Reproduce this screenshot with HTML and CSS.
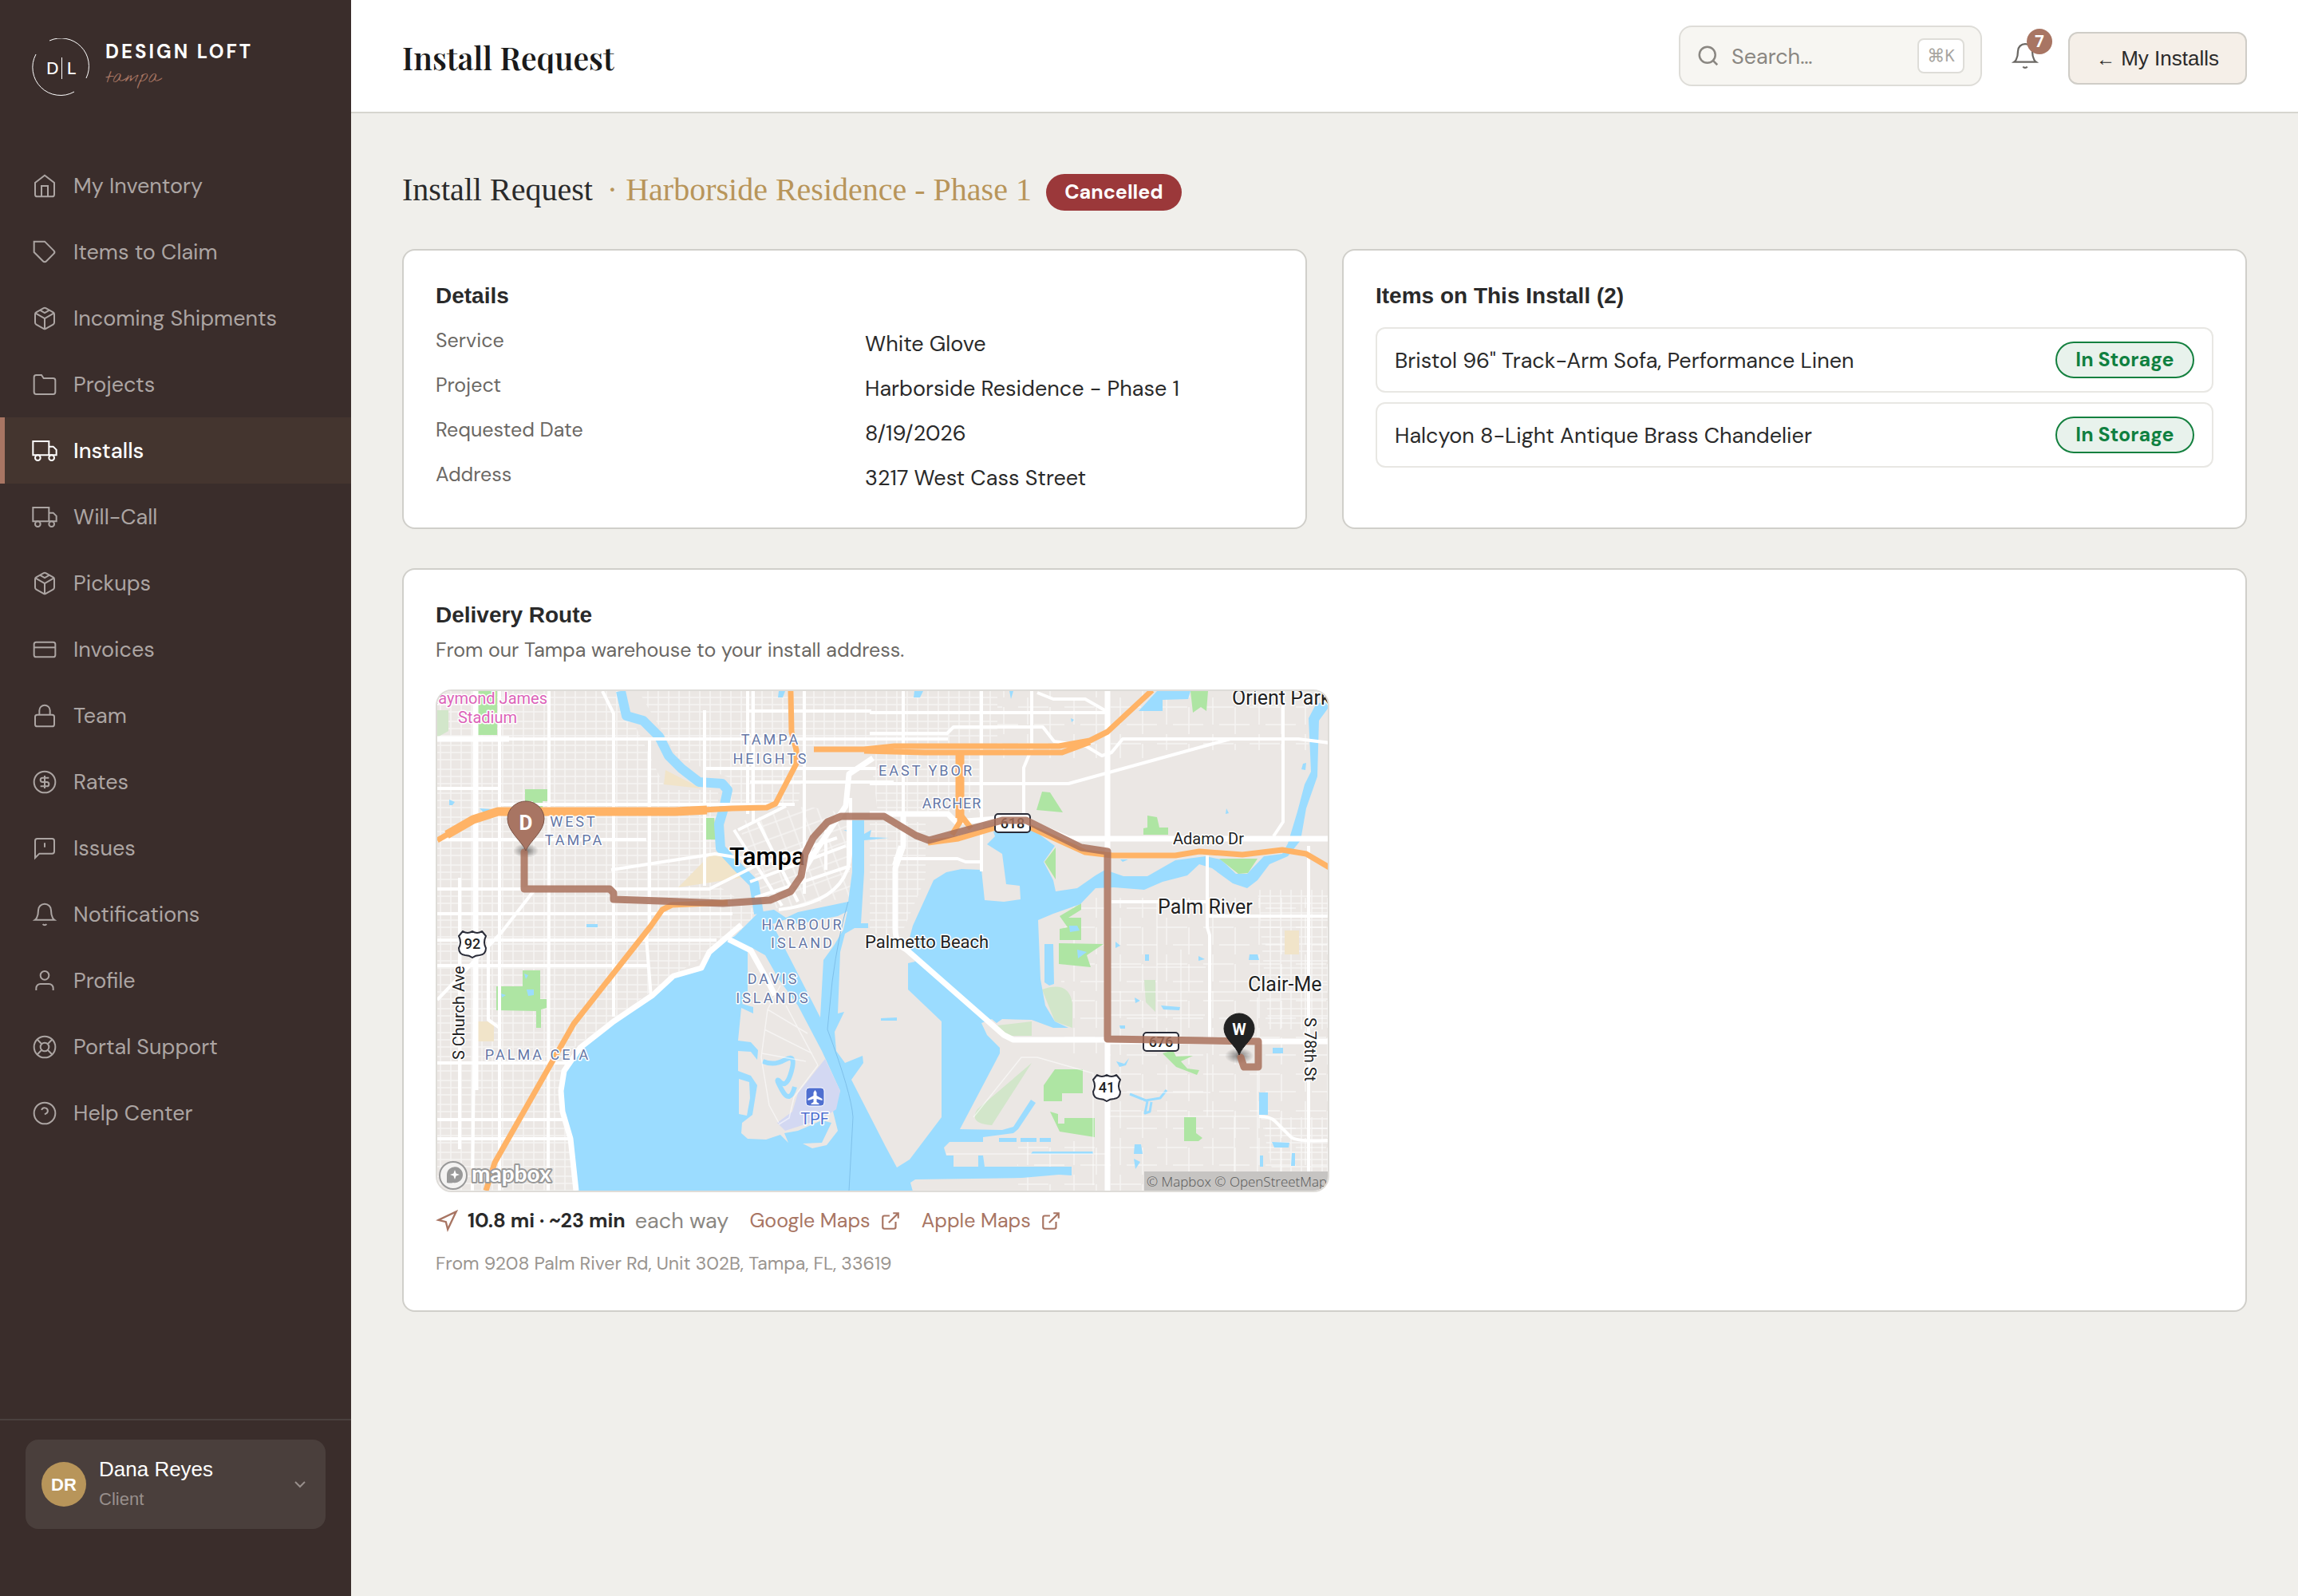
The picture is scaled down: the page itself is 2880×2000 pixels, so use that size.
FILE: index.html
```html
<!DOCTYPE html>
<html lang="en">
<head>
<meta charset="utf-8">
<title>Install Request</title>
<meta name="viewport" content="width=device-width, initial-scale=1">
<link rel="stylesheet" href="styles.css">
</head>
<body>
<svg class="sprite" aria-hidden="true">
  <symbol id="home" viewBox="0 0 24 24"><path d="M3 9l9-7 9 7v11a2 2 0 0 1-2 2H5a2 2 0 0 1-2-2z"/><path d="M9 22V12h6v10"/></symbol>
  <symbol id="tag" viewBox="0 0 24 24"><path d="M20.59 13.41l-7.17 7.17a2 2 0 0 1-2.83 0L2 12V2h10l8.59 8.59a2 2 0 0 1 0 2.82z"/></symbol>
  <symbol id="box" viewBox="0 0 24 24"><path d="M21 16V8a2 2 0 0 0-1-1.73l-7-4a2 2 0 0 0-2 0l-7 4A2 2 0 0 0 3 8v8a2 2 0 0 0 1 1.73l7 4a2 2 0 0 0 2 0l7-4A2 2 0 0 0 21 16z"/><path d="M7.5 4.21l4.5 2.6 4.5-2.6M3.27 6.96L12 12.01l8.73-5.05M12 22.08V12"/></symbol>
  <symbol id="folder" viewBox="0 0 24 24"><path d="M22 19a2 2 0 0 1-2 2H4a2 2 0 0 1-2-2V5a2 2 0 0 1 2-2h5l2 3h9a2 2 0 0 1 2 2z"/></symbol>
  <symbol id="truck" viewBox="0 0 24 24"><path d="M1 3h15v13H1zM16 8h4l3 3v5h-7z"/><circle cx="5.5" cy="18.5" r="2.5"/><circle cx="18.5" cy="18.5" r="2.5"/></symbol>
  <symbol id="card" viewBox="0 0 24 24"><rect x="2" y="5" width="20" height="14" rx="2"/><path d="M2 10h20"/></symbol>
  <symbol id="lock" viewBox="0 0 24 24"><rect x="3" y="11" width="18" height="11" rx="2"/><path d="M7 11V7a5 5 0 0 1 10 0v4"/></symbol>
  <symbol id="dollar" viewBox="0 0 24 24"><circle cx="12" cy="12" r="10"/><path d="M16 8h-6a2 2 0 1 0 0 4h4a2 2 0 1 1 0 4H8M12 18V6"/></symbol>
  <symbol id="message" viewBox="0 0 24 24"><path d="M21 15a2 2 0 0 1-2 2H7l-4 4V5a2 2 0 0 1 2-2h14a2 2 0 0 1 2 2zM12 7v4"/></symbol>
  <symbol id="bell" viewBox="0 0 24 24"><path d="M18 8A6 6 0 0 0 6 8c0 7-3 9-3 9h18s-3-2-3-9M13.73 21a2 2 0 0 1-3.46 0"/></symbol>
  <symbol id="user" viewBox="0 0 24 24"><path d="M20 21v-2a4 4 0 0 0-4-4H8a4 4 0 0 0-4 4v2"/><circle cx="12" cy="7" r="4"/></symbol>
  <symbol id="buoy" viewBox="0 0 24 24"><circle cx="12" cy="12" r="10"/><circle cx="12" cy="12" r="4"/><path d="M4.93 4.93l4.24 4.24M14.83 14.83l4.24 4.24M14.83 9.17l4.24-4.24M4.93 19.07l4.24-4.24"/></symbol>
  <symbol id="help" viewBox="0 0 24 24"><circle cx="12" cy="12" r="10"/><path d="M9.09 9a3 3 0 0 1 5.83 1c0 2-3 3-3 3"/></symbol>
  <symbol id="search" viewBox="0 0 24 24"><circle cx="11" cy="11" r="8"/><path d="M21 21l-4.35-4.35"/></symbol>
  <symbol id="chevron" viewBox="0 0 24 24"><path d="M6 9l6 6 6-6"/></symbol>
  <symbol id="navigate" viewBox="0 0 24 24"><path d="M3 11l19-9-9 19-2-8z"/></symbol>
  <symbol id="external" viewBox="0 0 24 24"><path d="M18 13v6a2 2 0 0 1-2 2H5a2 2 0 0 1-2-2V8a2 2 0 0 1 2-2h6M15 3h6v6M10 14L21 3"/></symbol>
</svg>

<div class="app">
  <aside class="sidebar">
    <a class="brand" href="#">
      <svg class="brand-mark" viewBox="0 0 72 72" aria-hidden="true">
        <path d="M22 3A35 35 0 0 1 68 50M53 67A35 35 0 0 1 5 20M37.500 24v27"/>
        <text x="26" y="45">D</text><text x="50" y="45">L</text>
      </svg>
      <span class="brand-text"><span class="brand-name">DESIGN LOFT</span><span class="brand-city">tampa</span></span>
    </a>
    <nav class="nav">
      <a href="#"><svg class="icon"><use href="#home"/></svg>My Inventory</a>
      <a href="#"><svg class="icon"><use href="#tag"/></svg>Items to Claim</a>
      <a href="#"><svg class="icon"><use href="#box"/></svg>Incoming Shipments</a>
      <a href="#"><svg class="icon"><use href="#folder"/></svg>Projects</a>
      <a href="#" class="active" aria-current="page"><svg class="icon"><use href="#truck"/></svg>Installs</a>
      <a href="#"><svg class="icon"><use href="#truck"/></svg>Will-Call</a>
      <a href="#"><svg class="icon"><use href="#box"/></svg>Pickups</a>
      <a href="#"><svg class="icon"><use href="#card"/></svg>Invoices</a>
      <a href="#"><svg class="icon"><use href="#lock"/></svg>Team</a>
      <a href="#"><svg class="icon"><use href="#dollar"/></svg>Rates</a>
      <a href="#"><svg class="icon"><use href="#message"/></svg>Issues</a>
      <a href="#"><svg class="icon"><use href="#bell"/></svg>Notifications</a>
      <a href="#"><svg class="icon"><use href="#user"/></svg>Profile</a>
      <a href="#"><svg class="icon"><use href="#buoy"/></svg>Portal Support</a>
      <a href="#"><svg class="icon"><use href="#help"/></svg>Help Center</a>
    </nav>
    <div class="account">
      <button class="account-button" type="button">
        <span class="avatar">DR</span>
        <span class="account-text"><span class="account-name">Dana Reyes</span><span class="account-role">Client</span></span>
        <svg class="icon icon-chevron"><use href="#chevron"/></svg>
      </button>
    </div>
  </aside>

  <div class="page">
    <header class="topbar">
      <h1 class="topbar-title">Install Request</h1>
      <div class="topbar-actions">
        <label class="search">
          <svg class="icon icon-search"><use href="#search"/></svg>
          <input type="text" placeholder="Search…" aria-label="Search">
          <kbd>⌘K</kbd>
        </label>
        <button class="bell" type="button" aria-label="Notifications"><svg class="icon icon-bell"><use href="#bell"/></svg><span class="bell-count">7</span></button>
        <button class="back" type="button"><span class="back-arrow">←</span> My Installs</button>
      </div>
    </header>

    <main class="content">
      <div class="heading">
        <h2>Install Request</h2>
        <span class="heading-project">· Harborside Residence - Phase 1</span>
        <span class="badge badge-cancelled">Cancelled</span>
      </div>

      <div class="columns">
        <section class="panel">
          <h3>Details</h3>
          <dl class="details">
            <dt>Service</dt><dd>White Glove</dd>
            <dt>Project</dt><dd>Harborside Residence - Phase 1</dd>
            <dt>Requested Date</dt><dd>8/19/2026</dd>
            <dt>Address</dt><dd>3217 West Cass Street</dd>
          </dl>
        </section>
        <section class="panel">
          <h3>Items on This Install (2)</h3>
          <ul class="items">
            <li><span>Bristol 96" Track-Arm Sofa, Performance Linen</span><span class="badge badge-stored">In Storage</span></li>
            <li><span>Halcyon 8-Light Antique Brass Chandelier</span><span class="badge badge-stored">In Storage</span></li>
          </ul>
        </section>
      </div>

      <section class="panel">
        <h3>Delivery Route</h3>
        <p class="route-note">From our Tampa warehouse to your install address.</p>
        <svg class="map" viewBox="548 866 1116 626" role="img" aria-label="Map of the delivery route">
          <defs>
            <pattern id="blocks" width="26" height="30" patternUnits="userSpaceOnUse"><path d="M0 4h26M0 13h26M0 22h26M6 0v30M19 0v30"/></pattern>
            <pattern id="blocks-wide" width="58" height="46" patternUnits="userSpaceOnUse"><path d="M0 12h38M20 34h38M12 0v34M40 12v34"/></pattern>
            <pattern id="blocks-tilt" width="18" height="18" patternUnits="userSpaceOnUse" patternTransform="rotate(-20)"><path d="M0 4h18M4 0v18"/></pattern>
            <radialGradient id="pin-shadow"><stop offset="0" stop-color="#000" stop-opacity=".5"/><stop offset="1" stop-color="#000" stop-opacity="0"/></radialGradient>
          </defs>
          <rect class="land" x="548" y="866" width="1116" height="626"/>
          <g class="blocks">
            <path fill="url(#blocks)" d="M548 866H775L835 990H900V1110L960 1150 840 1225 710 1320 720 1492H548z"/>
            <path fill="url(#blocks)" d="M800 866H1250V935H1010L1000 1010H915V975L850 950zM1090 940H1230V1018H1100zM1090 1030H1160V1100L1130 1170H1090z"/>
            <path fill="url(#blocks-tilt)" d="M925 1030L1010 1010 1063 1020 1066 1125 960 1140z"/>
            <path fill="url(#blocks-wide)" d="M1250 866H1440V950H1250zM1390 866H1640V940H1390zM1330 1125H1664V1492H1275V1430H1390V1320H1330z"/>
            <path fill="url(#blocks)" d="M1576 1115H1664V1290H1590zM1580 1400H1664V1492H1600z"/>
          </g>

          <g class="park">
            <path d="M599 866h24v55h-24zM658 989h28v15h-6v20h-12v-20h-10zM881 1025h14l3 27h-17z"/>
            <path d="M655 1216h22v36h8v11l-7 2v23h-6v-21l-50-1v-30h33z"/>
            <path d="M1306 992l10 1 16 25-33-3zM1438 1022l12 2 3 13h11v9h-31v-8l5-1z"/>
            <path d="M1492 866h22l-2 25-7-5-10 7zM1328 1148l27-16v8l-16 10h16v28h-27v-14l10-2z"/>
            <path d="M1327 1182l56 1-21 14 5 15-40-4zM1322 1340h35v30h-26v10h-23v-20z"/>
            <path d="M1316 1393l10 3v12h8v-7h38v24l-44-7zM1484 1400h15v20l8 6-5 4h-18z"/>
            <path d="M1457 1320l13-4 4 8 21-1-15 7 8 9 15 2-3 6-26-10z"/>
          </g>
          <g class="marsh">
            <path d="M1293 1332l-68 58q-12 18 18 20zM1250 1285l43-5v18h-30zM1306 1240q34-12 38 18v30l-22-8zM1434 1228h14v40l-12-12zM548 890h14v26l-14 8z"/>
          </g>
          <path class="school" d="M834 965l45 23-47-5zM891 1070h18l20 30-79 12zM595 1280h24v25h-24zM1610 1166h18v30h-18z"/>

          <g class="water">
            <path d="M722 1493L715 1427 705 1393 703 1367 707 1342 727 1313 769 1280 818 1247 844 1223 879 1213 889 1193 913 1177 921 1173 951 1143 970 1140 985 1150 1000 1143 1063 1130 1068 1093V1045L1057 1040 1068 1041V1028H1083V1045L1092 1040 1090 1049 1114 1050 1083 1053V1093L1079 1157H1088V1163H1071L1059 1170 1053 1193 1050 1270 1058 1268 1046 1293 1048 1317 1059 1332 1081 1323 1082 1332 1067 1353 1110 1437 1124 1463 1140 1453 1180 1400V1280L1138 1240V1207L1147 1205 1136 1190 1144 1160 1170 1103 1186 1093 1205 1089 1230 1090 1234 1128 1258 1130 1279 1127 1278 1110 1261 1108 1256 1070 1237 1058 1247 1048 1245 1042 1291 1037 1322 1060 1308 1080 1320 1103 1323 1117 1350 1113 1373 1097 1385 1090 1408 1098H1438L1473 1078 1511 1073 1530 1077 1549 1095H1563L1584 1073 1607 1070 1614 1057 1626 1017 1635 983 1643 967 1640 900 1649 883 1664 877V888L1653 903 1651 973 1637 1013 1630 1053 1614 1073 1591 1083 1576 1103 1563 1113 1545 1107 1519 1088 1503 1083 1488 1097 1457 1105 1434 1115 1396 1112 1373 1113 1354 1133 1320 1145 1301 1153 1304 1227 1310 1260 1322 1280 1339 1288 1320 1288 1293 1278 1256 1277 1249 1282 1243 1277 1230 1282 1237 1297 1253 1313V1320L1203 1415 1256 1416 1270 1412 1292 1378 1298 1382 1276 1415 1270 1420 1232 1425V1431H1190L1183 1438 1186 1448H1195V1462H1226V1448H1232L1234 1462H1343V1473L1327 1472 1281 1476 1147 1478 1141 1482 1144 1493z"/>
            <path d="M1450 866h42l-3 10-32 1v14h-30zM1146 866h11l-4 8h-8zM1265 866h5l-3 10zM976 866h8l-3 8h-6zM563 1002l7 3-3 4h-4zM601 1013l14 1-8 5zM735 1158h14v4h-14zM1309 1183h11l1 50-6 2-6-4zM1340 1160h10l3 6-12 2zM1350 1190l12 3-11 8zM1398 1180l6 5-6 3zM1435 1196h5v8h-5zM1502 1198l8 4-8 2zM1566 1196h10l2 7h-13zM1422 1250l7 4-6 3zM1455 1260l24 2-1 4-20-1zM1403 1285h7v4h-6zM1595 1313h13v7h-13zM1578 1369h11v28h-11zM1594 1431l22 1-1 6h-18zM1422 1434h8l2 12h-11zM1421 1452l8 4-6 9zM1619 1445h4v16h-5zM1579 1448h4v14h-4zM1294 1443h76v3h-78zM1252 1426h22v5h-22zM1279 1426h20v5h-20zM1303 1426h14v5h-14zM1404 1077h10l-7 3zM1633 957l4-1-1 9-5-1zM1537 1013l3 6-4 1zM1342 900l4 2-3 3zM1399 1330l10 3 6-7-4 9-8 2zM1104 1276l20-1v4h-20zM657 1220l5 2-3 5zM628 1245l6 2-5 3zM660 1240h9v7l-7 1z"/>
          </g>
          <path class="river" d="M778 866L785 897 806 903 826 923 838 947 854 963 876 980 905 982 912 990 907 1013 901 1033 903 1063 925 1087 945 1107 951 1145"/>
          <path class="creek" d="M1416 1371l20 8 18-3 8-10M1438 1380l-3 15 6-2 2-12"/>

          <g class="island">
            <path d="M968 1158L985 1152 1000 1158 1050 1148 1062 1142 1057 1165 1045 1185 1032 1203 1028 1275z"/>
            <path d="M941 1187L959 1197 976 1227 1000 1260 1030 1317 1053 1367 1044 1393 1050 1417 1036 1435 1018 1439 1006 1433 1030 1432 1042 1407 1030 1404 1000 1417 983 1420 988 1432 978 1422 960 1428 937 1427 929 1420 930 1407 943 1397 949 1360 941 1348 925 1342V1317L941 1318 949 1328 950 1316 941 1306 925 1304 929 1263 944 1270 944 1262 930 1258 937 1243V1193z"/>
            <path d="M926 1352l13 4 1 20-4 22-10-2z"/>
          </g>
          <path class="airport" d="M1034 1327L1053 1367 1048 1390 1030 1402 984 1417 974 1407 993 1393 1000 1370z"/>
          <path class="inlet" d="M956 1330q14 6 28-2t8 14-14 14 2 10 16-4"/>
          <path class="marsh-bright" d="M1323 1062v40l-14-22zM1528 1076h48l-12 18-12 1z"/>
          <path class="ferry" d="M1063 1130q-12 40-20 100l-6 60q30 80 32 110l-5 92"/>

          <g class="streets">
            <path d="M978 1235l-16 30-8 60 10 60 12 22M985 1260l40 75-30 40-6 26-13 8M962 1265l50 30M958 1290l60 30M955 1320l55 10"/>
            <path d="M1387 1399h190M1387 1369h130M1387 1212h124M1387 1243h250M1450 1130v170M1576 1250v240M1480 1190v110M1220 1400l60-75h20l70 20v140M1186 1446h200M1513 1320v80M1390 1272h120M1547 1400v92"/>
          </g>
          <g class="road">
            <path d="M596 866V1160L592 1492M626 866V1492M688 866V1060L687 1492M755 866l14 28v380M814 925v235l-4 15 6 75M883 1008V890M883 980V1110M937 866V1020M944 866V1030M1008 866V1120M576 1100v340"/>
            <path d="M548 926h640M548 988h80M548 1052h262M626 1008h370M548 1114h220M769 1114h120l60-30 100-34M548 1145h370M548 1178h350M548 1210h265M548 1332h165M548 1403h160M548 1427h165M883 963h215M937 891h155M940 980h180"/>
            <path d="M548 1253l80-84 42-54M612 1178v100l14 10M766 1090l130-20 62 10"/>
            <path d="M1230 866V1092M1293 866v72l-10 24v66M1132 866V1060M1128 1060l-8 24M1090 893h298M1090 919h97l8-8h112l14 18 40 6 20 12 12-4 14-17h220l40 5M1090 982h249l203-56M1300 868l20 8h40l28 16M1120 1076h80l10 4h20"/>
            <path d="M1608 866V1030l-12 18M1513 1072v90l3 10v130M1640 1060v430M1513 1148h151M1393 1130h120"/>
            <path d="M1578 1399q14 0 20 6l20 20q8 6 46 4M1063 1020v70M920 1040l60 95M950 1030l50 100M985 1010l-60 30M1060 1060l-120 45M1066 1085l-120 40M1035 1040v50M1066 1000v70q-4 60-90 70"/>
          </g>
          <g class="road road-main">
            <path d="M548 926h90M596 866v500M1388 866V1492M1090 1020h98l10 10 52-4M1285 1028l54 23H1664M1132 1020v40l-10 28v76q0 20 14 26L1258 1297l12 6h118M1388 1305h276"/>
            <path d="M722 1492l-7-65-10-34-2-26 4-25 20-29 42-33 49-33 26-24 35-10 10-20 40-34M913 1177l28 14 20 36 10 20"/>
            <path d="M1018 1050l-10 40 12-20 40-60 4-40 30-20"/>
          </g>

          <g class="highway">
            <path d="M548 1053l45-26 31-10h222l71-4 44-1 11-5 26-50v-17l-6-23-1-51"/>
            <path d="M609 1492l11-35 99-174 97-123 14-20 12-6 70-3"/>
            <path d="M1020 939h63l38-4h206l39-7 22-11 56-52M1083 941l76 2h172l35-13M1163 1056l38-5 60-18M1285 1034l75 34 34 4h79l30-5 54 4 50-6 30 5 29 17M1203 940v90l-10 16M1203 1020l14 18"/>
          </g>
          <path class="highway-wide" d="M560 1046l33-19 31-10h222l40-2M1203 945v80"/>

          <g class="label place">
            <text x="686" y="882" class="pink" text-anchor="end">Raymond James</text><text x="611" y="906" class="pink" text-anchor="middle">Stadium</text>
            <text x="1544" y="883" class="town">Orient Park</text><text x="914" y="1084" class="city">Tampa</text>
            <text x="1084" y="1188">Palmetto Beach</text><text x="1470" y="1058" class="street">Adamo Dr</text>
            <text x="1451" y="1145" class="town">Palm River</text><text x="1564" y="1242" class="town">Clair-Me</text>
            <text class="street" transform="translate(582 1328) rotate(-90)">S Church Ave</text><text class="street" transform="translate(1635 1275) rotate(90)">S 78th St</text>
          </g>
          <g class="label district">
            <text x="966" y="933">TAMPA</text><text x="966" y="957">HEIGHTS</text><text x="1161" y="972">EAST YBOR</text><text x="1193" y="1013" class="tight">ARCHER</text>
            <text x="719" y="1036">WEST</text><text x="720" y="1059">TAMPA</text><text x="1006" y="1165">HARBOUR</text><text x="1006" y="1188">ISLAND</text>
            <text x="969" y="1233">DAVIS</text><text x="969" y="1257">ISLANDS</text><text x="674" y="1328">PALMA CEIA</text>
          </g>
          <g class="shield">
            <rect x="1247" y="1020" width="44" height="23" rx="4"/><text x="1269" y="1038">618</text>
            <rect x="1433" y="1294" width="44" height="23" rx="4"/><text x="1455" y="1312">676</text>
            <path d="M580 1167q6 4 12 0 6 4 12 0l5 6q-4 8 0 15 0 8-8 9-5 0-9 3-4-3-9-3-8-1-8-9 4-7 0-15z"/><text x="592" y="1189">92</text>
            <path d="M1375 1347q6 4 12 0 6 4 12 0l5 6q-4 8 0 15 0 8-8 9-5 0-9 3-4-3-9-3-8-1-8-9 4-7 0-15z"/><text x="1387" y="1369">41</text>
          </g>
          <rect class="plane-box" x="1010" y="1363" width="23" height="23" rx="4"/>
          <path class="plane" d="M1021.500 1366l2 3v4l7 4v2l-7-2v4l3 2v1h-10v-1l3-2v-4l-7 2v-2l7-4v-4z"/>
          <text class="label plane-code" x="1021" y="1409">TPF</text>

          <ellipse cx="659" cy="1066" rx="16" ry="9" fill="url(#pin-shadow)"/>
          <ellipse cx="1553" cy="1323" rx="18" ry="10" fill="url(#pin-shadow)"/>
          <path class="route" d="M657 1068v46h107l5 5v8l58 2 79 3 59-4 26-11 13-19 5-28 10-20 18-20 17-7h54l40 24 16 6 92-25h30l69 34 33 5v235l189 3v32h-18l-4-12"/>
          <path class="pin" d="M659 1066c-5-12-23-24-23-40a23 22 0 0 1 46 0c0 16-18 28-23 40z"/>
          <path class="pin pin-dark" d="M1553 1322c-4-12-19-20-19-33a19 19 0 0 1 38 0c0 13-15 21-19 33z"/>
          <text class="pin-letter" x="659" y="1040">D</text><text class="pin-letter pin-letter-small" x="1553" y="1297">W</text>

          <circle class="logo-ring" cx="568" cy="1473" r="17"/>
          <path class="logo-drop" d="M560 1482v-10a10 10 0 1 1 8 10q-4 1-8 0z"/>
          <path class="logo-star" d="M570 1466l1.600 4.400 4.400 1.600-4.400 1.600-1.600 4.400-1.600-4.400-4.400-1.600 4.400-1.600z"/>
          <text class="logo-text" x="591" y="1481">mapbox</text>
          <rect class="credit-box" x="1434" y="1468" width="230" height="24"/>
          <text class="credit" x="1437" y="1487">© Mapbox © OpenStreetMap</text>
        </svg>
        <div class="trip">
          <svg class="icon icon-navigate"><use href="#navigate"/></svg>
          <strong>10.8 mi · ~23 min</strong>
          <span class="trip-each">each way</span>
          <a href="#">Google Maps <svg class="icon icon-external"><use href="#external"/></svg></a>
          <a href="#">Apple Maps <svg class="icon icon-external"><use href="#external"/></svg></a>
        </div>
        <p class="origin">From 9208 Palm River Rd, Unit 302B, Tampa, FL, 33619</p>
      </section>
    </main>
  </div>
</div>
</body>
</html>
```
FILE: styles.css
```css
:root {
  --sans: "DM Sans", Inter, sans-serif;
  --ui: "Liberation Sans", Arial, sans-serif;
  --serif: "Liberation Serif", "Times New Roman", serif;
  --display: "Playfair Display", "Liberation Serif", serif;
  --script: "Nothing You Could Do", "La Belle Aurore", "Liberation Serif", serif;
  --ink: #2a2a2a;
  --accent: #a87563;
  --gold: #b8955a;
  --line: #d0cfca;
}

* { box-sizing: border-box; }
body { margin: 0; background: #f0efeb; color: var(--ink); font: 27px/41px var(--sans); }
h1, h2, h3, p, dl, dd, ul { margin: 0; padding: 0; }
button, input, kbd { font: inherit; color: inherit; }
a { color: inherit; text-decoration: none; }
.sprite { display: none; }
.icon { width: 32px; height: 32px; flex: none; fill: none; stroke: currentColor; stroke-width: 1.5; }

.app { display: flex; min-height: 100vh; }

/* Sidebar */
.sidebar { width: 440px; flex: none; display: flex; flex-direction: column; background: #3a2d2b; }
.brand { display: flex; gap: 20px; padding: 48px 40px 71px; color: #fff; }
.brand-mark { width: 72px; height: 72px; fill: none; stroke: #fff; stroke-width: 1; }
.brand-mark text { fill: #fff; stroke: none; font: 500 22px var(--sans); text-anchor: middle; }
.brand-text { display: flex; flex-direction: column; }
.brand-name { font-size: 24px; line-height: 34px; font-weight: 700; letter-spacing: 3px; }
.brand-city { color: var(--accent); font: 22px/30px var(--script); }
.nav { flex: 1; display: flex; flex-direction: column; }
.nav a { display: flex; align-items: center; gap: 20px; height: 83px; padding-left: 34px; border-left: 6px solid transparent; color: #aca5a3; }
.nav .active { background: #44352f; border-color: var(--accent); color: #fff; font-weight: 500; }
.account { padding: 24px 32px 84px; border-top: 2px solid #4a403e; }
.account-button { display: flex; align-items: center; gap: 16px; width: 100%; height: 112px; padding: 0 20px; border: 0; border-radius: 16px; background: #4a3f3c; color: #fff; font-family: var(--ui); text-align: left; }
.avatar { display: grid; place-items: center; width: 56px; height: 56px; border-radius: 50%; background: var(--gold); font-size: 22px; font-weight: 700; }
.account-text { flex: 1; display: flex; flex-direction: column; }
.account-name { font-size: 26px; line-height: 38px; }
.account-role { font-size: 22px; line-height: 38px; color: #988f8c; }
.icon-chevron { width: 24px; height: 24px; stroke: #988f8c; stroke-width: 2; }

/* Top bar */
.page { flex: 1; min-width: 0; }
.topbar { display: flex; align-items: center; justify-content: space-between; height: 142px; padding: 0 64px; background: #fff; border-bottom: 2px solid #d6d5cf; }
.topbar-title { overflow: hidden; padding-top: 4px; color: #1a1a1a; font: 600 39px/40px var(--display); }
.topbar-actions { display: flex; align-items: center; }
.search { display: flex; align-items: center; gap: 14px; width: 380px; height: 76px; padding: 0 20px; border: 2px solid #deddd8; border-radius: 16px; background: #f7f6f2; color: #8a8782; }
.search input { flex: 1; min-width: 0; padding: 0; border: 0; outline: 0; background: none; }
.search input::placeholder { color: #8a8782; opacity: 1; }
.search kbd { padding: 0 10px; border: 2px solid #deddd8; border-radius: 8px; background: #fff; color: #a8a5a0; font-size: 22px; line-height: 40px; }
.icon-search { width: 30px; height: 30px; stroke-width: 2; }
.bell { position: relative; display: flex; width: 36px; height: 36px; margin: 0 36px; padding: 0; border: 0; background: none; color: #6a6763; }
.icon-bell { width: 36px; height: 36px; }
.bell-count { position: absolute; left: 20px; top: -16px; width: 32px; height: 32px; border-radius: 50%; background: var(--accent); color: #fff; font-size: 22px; line-height: 32px; font-weight: 700; text-align: center; }
.back { width: 224px; height: 66px; margin-top: 6px; padding: 0; border: 2px solid #cfcdc7; border-radius: 12px; background: #f5efe8; font-family: var(--ui); font-size: 26px; }
.back-arrow { font-size: 24px; }

/* Content */
.content { padding: 70px 64px; }
.heading { display: flex; align-items: flex-end; gap: 18px; margin-bottom: 48px; font: 40px/52px var(--serif); }
.heading h2 { font: inherit; }
.heading-project { color: var(--gold); }
.badge { display: flex; align-items: center; justify-content: center; height: 46px; border-radius: 23px; font: 700 25px/42px var(--sans); }
.badge-cancelled { width: 170px; background: #9b383a; color: #fff; }
.badge-stored { width: 174px; border: 2px solid #14803f; background: #e8f2ec; color: #0f8040; }
.columns { display: grid; grid-template-columns: 1fr 1fr; gap: 44px; margin-bottom: 49px; }
.panel { padding: 40px 40px 42px; border: 2px solid var(--line); border-radius: 16px; background: #fff; }
.panel h3 { font: 700 28px/34px var(--ui); }
.details { display: grid; grid-template-columns: 1fr 1fr; gap: 15px 26px; margin-top: 22px; }
.details dt { color: #6b6864; font-size: 25px; line-height: 34px; }
.items { display: grid; gap: 12px; margin-top: 22px; list-style: none; }
.items li { display: flex; align-items: center; justify-content: space-between; height: 82px; padding: 0 22px; border: 2px solid #e8e7e3; border-radius: 12px; }

/* Delivery route */
.route-note { margin-top: 10px; color: #6b6864; font-size: 25px; line-height: 34px; }
.trip { display: flex; align-items: center; gap: 12px; margin-top: 16px; line-height: 40px; }
.trip strong { font-size: 25px; }
.trip a { display: flex; align-items: center; gap: 12px; margin-left: 14px; color: var(--accent); font-size: 25px; }
.trip-each { color: #8a8782; }
.icon-navigate { width: 28px; height: 28px; color: var(--accent); stroke-width: 2; }
.icon-external { width: 26px; height: 26px; stroke-width: 2; }
.origin { margin-top: 16px; color: #9a9590; font-size: 23px; line-height: 34px; }

/* Map */
.map { display: block; width: 100%; max-width: 1120px; margin-top: 32px; border: 2px solid #dedcd8; border-radius: 20px; font-family: Roboto, sans-serif; fill: none; stroke-linejoin: round; }
.land, .island { fill: #ebe7e4; }
.map pattern path, .streets { stroke: #fff; stroke-width: 1.5; opacity: .55; }
.park { fill: #aee5a3; }
.marsh { fill: #d2e6ca; }
.marsh-bright { fill: #aee5a3; }
.school { fill: #f1e4c9; }
.water { fill: #9bdcff; }
.river { stroke: #9bdcff; stroke-width: 12; }
.creek { stroke: #9bdcff; stroke-width: 3; }
.inlet { stroke: #9bdcff; stroke-width: 6; }
.ferry { stroke: #7fc0ea; stroke-width: 1; }
.airport { fill: #d3d8f2; }
.road { stroke: #fff; stroke-width: 4; }
.road-main { stroke-width: 7; }
.highway { stroke: #ffb366; stroke-width: 7; }
.highway-wide { stroke: #ffb366; stroke-width: 11; }
.label { stroke: #fff; stroke-width: 3; paint-order: stroke; fill: #222; font-size: 22px; }
.label .pink { fill: #dc63b8; font-size: 20px; }
.label .town { font-size: 25px; }
.label .city { fill: #000; font-size: 31px; font-weight: 500; }
.label .street { font-size: 20px; }
.district { fill: #6577a6; font-size: 18px; letter-spacing: 3px; text-anchor: middle; }
.district .tight { letter-spacing: 1px; }
.shield { fill: #fff; stroke: #2a2c38; stroke-width: 2; }
.shield text { fill: #222; stroke: none; font-size: 18px; font-weight: 500; text-anchor: middle; }
.plane-box { fill: #4f6fd0; stroke: #fff; }
.plane { fill: #fff; }
.plane-code { fill: #4f6fd0; font-size: 20px; text-anchor: middle; }
.route { stroke: #a8705a; stroke-width: 9; opacity: .85; stroke-linecap: round; }
.pin { fill: #a87563; stroke: #7a5244; stroke-width: 1; }
.pin-dark { fill: #222; stroke: #222; }
.pin-letter { fill: #fff; font-size: 26px; font-weight: 700; text-anchor: middle; }
.pin-letter-small { font-size: 20px; }
.logo-ring { fill: #f4f3f2; stroke: #999; stroke-width: 2; }
.logo-drop { fill: #999; }
.logo-star { fill: #fff; }
.logo-text { fill: #fff; stroke: #999; stroke-width: 4; paint-order: stroke; font: 700 28px Lato, sans-serif; }
.credit-box { fill: #c6c4c2; }
.credit { fill: #555; font: 300 17px "Open Sans", sans-serif; }
```
